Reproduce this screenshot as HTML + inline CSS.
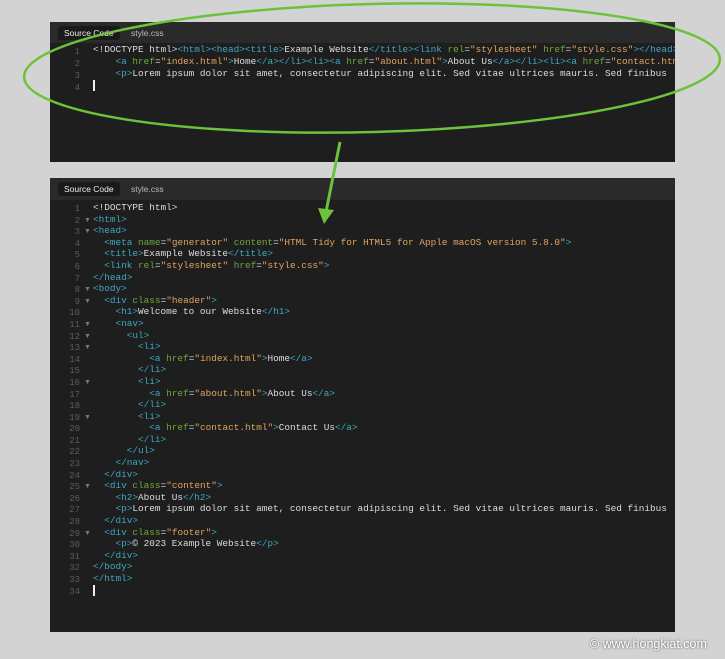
<!DOCTYPE html>
<html><head><style>
body{margin:0;width:725px;height:659px;background:#d3d3d3;position:relative;overflow:hidden;font-family:"Liberation Sans",sans-serif}
.p{position:absolute;left:50px;width:625px;background:#1e1e1e;overflow:hidden}
.tb{height:21px;background:#2a2a2a;position:relative}
.tab{position:absolute;top:4px;font-size:8.5px;color:#bbb;padding:2px 6px;border-radius:3px}
.tab.on{background:#1a1a1a;color:#eee;left:8px}
.ln{position:absolute;left:0;width:30px;text-align:right;color:#5c5c5c;font:9px/1 "Liberation Mono",monospace;white-space:pre}
.cd{position:absolute;left:43px;color:#ddd;font:9.4px "Liberation Mono",monospace;white-space:pre}
.t{color:#3fa8c4}.a{color:#6ea83c}.s{color:#e0a560}
.f{position:absolute;left:34px;color:#777;font-size:7px}
.cur{display:inline-block;width:2px;height:11px;background:#eee;vertical-align:middle}
</style></head><body>
<div class="p" style="top:22px;height:140px">
<div class="tb"><span class="tab on">Source Code</span><span class="tab" style="left:75px">style.css</span></div>
<div class="ln" style="top:24px;line-height:12px">1
2
3
4</div>
<div class="cd" style="top:22px;line-height:12px">&lt;!DOCTYPE html&gt;<span class="t">&lt;html&gt;&lt;head&gt;&lt;title&gt;</span>Example Website<span class="t">&lt;/title&gt;&lt;link</span> <span class="a">rel</span>=<span class="s">"stylesheet"</span> <span class="a">href</span>=<span class="s">"style.css"</span><span class="t">&gt;&lt;/head&gt;</span>
    <span class="t">&lt;a</span> <span class="a">href</span>=<span class="s">"index.html"</span><span class="t">&gt;</span>Home<span class="t">&lt;/a&gt;&lt;/li&gt;&lt;li&gt;&lt;a</span> <span class="a">href</span>=<span class="s">"about.html"</span><span class="t">&gt;</span>About Us<span class="t">&lt;/a&gt;&lt;/li&gt;&lt;li&gt;&lt;a</span> <span class="a">href</span>=<span class="s">"contact.html"</span>
    <span class="t">&lt;p&gt;</span>Lorem ipsum dolor sit amet, consectetur adipiscing elit. Sed vitae ultrices mauris. Sed finibus
<span class="cur"></span></div>
</div>
<div class="p" style="top:178px;height:454px">
<div class="tb" style="height:22px"><span class="tab on">Source Code</span><span class="tab" style="left:75px">style.css</span></div>
<div class="ln" style="top:26px;line-height:11.6px">1
2
3
4
5
6
7
8
9
10
11
12
13
14
15
16
17
18
19
20
21
22
23
24
25
26
27
28
29
30
31
32
33
34</div>
<div class="f" style="top:25px;line-height:11.6px;white-space:pre">
▼
▼




▼
▼

▼
▼
▼


▼


▼





▼



▼</div>
<div class="cd" style="top:24px;line-height:11.6px">&lt;!DOCTYPE html&gt;
<span class="t">&lt;html&gt;</span>
<span class="t">&lt;head&gt;</span>
  <span class="t">&lt;meta</span> <span class="a">name</span>=<span class="s">"generator"</span> <span class="a">content</span>=<span class="s">"HTML Tidy for HTML5 for Apple macOS version 5.8.0"</span><span class="t">&gt;</span>
  <span class="t">&lt;title&gt;</span>Example Website<span class="t">&lt;/title&gt;</span>
  <span class="t">&lt;link</span> <span class="a">rel</span>=<span class="s">"stylesheet"</span> <span class="a">href</span>=<span class="s">"style.css"</span><span class="t">&gt;</span>
<span class="t">&lt;/head&gt;</span>
<span class="t">&lt;body&gt;</span>
  <span class="t">&lt;div</span> <span class="a">class</span>=<span class="s">"header"</span><span class="t">&gt;</span>
    <span class="t">&lt;h1&gt;</span>Welcome to our Website<span class="t">&lt;/h1&gt;</span>
    <span class="t">&lt;nav&gt;</span>
      <span class="t">&lt;ul&gt;</span>
        <span class="t">&lt;li&gt;</span>
          <span class="t">&lt;a</span> <span class="a">href</span>=<span class="s">"index.html"</span><span class="t">&gt;</span>Home<span class="t">&lt;/a&gt;</span>
        <span class="t">&lt;/li&gt;</span>
        <span class="t">&lt;li&gt;</span>
          <span class="t">&lt;a</span> <span class="a">href</span>=<span class="s">"about.html"</span><span class="t">&gt;</span>About Us<span class="t">&lt;/a&gt;</span>
        <span class="t">&lt;/li&gt;</span>
        <span class="t">&lt;li&gt;</span>
          <span class="t">&lt;a</span> <span class="a">href</span>=<span class="s">"contact.html"</span><span class="t">&gt;</span>Contact Us<span class="t">&lt;/a&gt;</span>
        <span class="t">&lt;/li&gt;</span>
      <span class="t">&lt;/ul&gt;</span>
    <span class="t">&lt;/nav&gt;</span>
  <span class="t">&lt;/div&gt;</span>
  <span class="t">&lt;div</span> <span class="a">class</span>=<span class="s">"content"</span><span class="t">&gt;</span>
    <span class="t">&lt;h2&gt;</span>About Us<span class="t">&lt;/h2&gt;</span>
    <span class="t">&lt;p&gt;</span>Lorem ipsum dolor sit amet, consectetur adipiscing elit. Sed vitae ultrices mauris. Sed finibus
  <span class="t">&lt;/div&gt;</span>
  <span class="t">&lt;div</span> <span class="a">class</span>=<span class="s">"footer"</span><span class="t">&gt;</span>
    <span class="t">&lt;p&gt;</span>© 2023 Example Website<span class="t">&lt;/p&gt;</span>
  <span class="t">&lt;/div&gt;</span>
<span class="t">&lt;/body&gt;</span>
<span class="t">&lt;/html&gt;</span>
<span class="cur"></span></div>
</div>
<svg width="725" height="659" style="position:absolute;left:0;top:0">
<ellipse cx="372" cy="68" rx="348" ry="64" fill="none" stroke="#6cc23a" stroke-width="2.5" transform="rotate(-1.5 372 68)"/>
<line x1="340" y1="142" x2="326" y2="212" stroke="#6cc23a" stroke-width="3"/>
<polygon points="318,208 334,210 324,224" fill="#6cc23a"/>
</svg>
<div style="position:absolute;left:590px;top:637px;font-size:12.5px;color:#fff;text-shadow:0 0 2px #444">© www.hongkiat.com</div>
</body></html>
